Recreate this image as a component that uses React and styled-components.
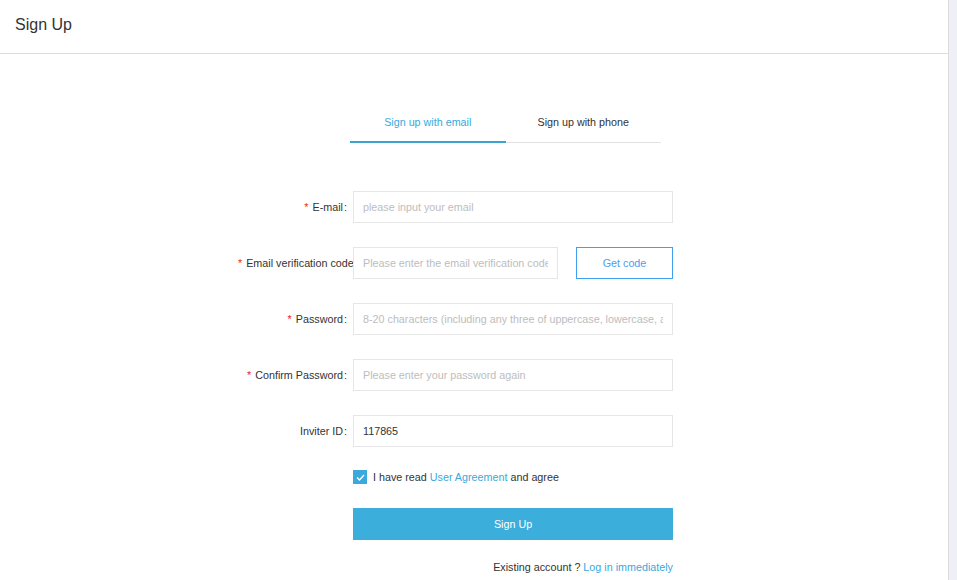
import React from "react";
import styled, { createGlobalStyle } from "styled-components";

const SMALL = "10.75px";

const Global = createGlobalStyle`
  html, body { margin: 0; padding: 0; background: #fff; }
  body { font-family: "Liberation Sans", Arial, sans-serif; color: #333; }
  * { box-sizing: border-box; }
  input::placeholder { color: #bdbdbd; opacity: 1; }
`;

const Page = styled.div`
  display: flex;
  width: 957px;
  height: 580px;
  overflow: hidden;
`;

const Main = styled.div`
  flex: 1;
  border-right: 1px solid #dcdcdc;
  display: flex;
  flex-direction: column;
`;

const Track = styled.div`
  width: 8px;
  background: #eef0f5;
`;

const Header = styled.header`
  height: 54px;
  padding: 16px 15px 0;
  border-bottom: 1px solid #dcdcdc;
  font-size: 16px;
  color: #333;
`;

const Body = styled.div`
  padding-top: 50px;
`;

const TabBar = styled.div`
  display: flex;
  width: 311px;
  margin-left: 350px;
  border-bottom: 1px solid #e2e2e2;
`;

const Tab = styled.div`
  flex: 1;
  text-align: center;
  font-size: ${SMALL};
  line-height: 13px;
  padding: 12px 0;
  margin-bottom: -1px;
  border-bottom: 2px solid ${(p) => (p.$active ? "#3aa3d2" : "transparent")};
  color: ${(p) => (p.$active ? "#39a9dc" : "#333")};
  cursor: pointer;
`;

const Form = styled.form`
  margin: 48px 0 0 238px;
`;

const Row = styled.div`
  display: flex;
  align-items: center;
  margin-bottom: ${(p) => p.$mb}px;
`;

const Label = styled.label`
  flex: none;
  width: 115px;
  padding-right: 6px;
  text-align: right;
  white-space: nowrap;
  font-size: ${SMALL};
  color: #333;
`;

const Star = styled.span`
  color: #f5222d;
  margin-right: 4px;
`;

const Colon = styled.span`
  margin-left: 1px;
`;

const Control = styled.div`
  flex: none;
  width: 320px;
  display: flex;
  align-items: center;
  justify-content: ${(p) => (p.$end ? "flex-end" : "flex-start")};
  gap: ${(p) => (p.$gap ?? 18)}px;
`;

const Input = styled.input`
  width: ${(p) => p.$w || 320}px;
  height: 32px;
  border: 1px solid #e6e6e6;
  background: #fff;
  padding: 0 9px;
  font-family: inherit;
  font-size: ${SMALL};
  color: #333;
  outline: none;
`;

const CodeButton = styled.button`
  width: 97px;
  height: 32px;
  border: 1px solid #3f9ff0;
  background: #fff;
  color: #4a9ef0;
  font-family: inherit;
  font-size: ${SMALL};
  padding: 0;
  cursor: pointer;
`;

const Check = styled.span`
  width: 14px;
  height: 14px;
  background: #3ba9da;
  display: inline-flex;
  align-items: center;
  justify-content: center;
  flex: none;
`;

const AgreeText = styled.span`
  font-size: ${SMALL};
  line-height: 14px;
  color: #333;
`;

const Link = styled.a`
  color: #39a9dc;
  text-decoration: none;
  cursor: pointer;
`;

const Submit = styled.button`
  width: 320px;
  height: 32px;
  border: none;
  background: #3caedb;
  color: #fff;
  font-family: inherit;
  font-size: ${SMALL};
  padding: 0;
  cursor: pointer;
`;

const Foot = styled.span`
  font-size: ${SMALL};
  line-height: 14px;
  color: #333;
`;

const Field = ({ label, required, children, mb = 24 }) => (
  <Row $mb={mb}>
    <Label>
      {required && <Star>*</Star>}
      {label}
      <Colon>:</Colon>
    </Label>
    <Control>{children}</Control>
  </Row>
);

export default function App() {
  return (
    <>
      <Global />
      <Page>
        <Main>
          <Header>Sign Up</Header>
          <Body>
            <TabBar>
              <Tab $active>Sign up with email</Tab>
              <Tab>Sign up with phone</Tab>
            </TabBar>
            <Form onSubmit={(e) => e.preventDefault()}>
              <Field label="E-mail" required>
                <Input placeholder="please input your email" />
              </Field>
              <Field label="Email verification code" required>
                <Input $w={205} placeholder="Please enter the email verification code" />
                <CodeButton type="button">Get code</CodeButton>
              </Field>
              <Field label="Password" required>
                <Input
                  type="password"
                  placeholder="8-20 characters (including any three of uppercase, lowercase, and numbers)"
                />
              </Field>
              <Field label="Confirm Password" required>
                <Input type="password" placeholder="Please enter your password again" />
              </Field>
              <Field label="Inviter ID" mb={23}>
                <Input defaultValue="117865" />
              </Field>
              <Row $mb={24}>
                <Label as="span" />
                <Control $gap={6}>
                  <Check>
                    <svg width="9" height="7" viewBox="0 0 9 7">
                      <path d="M1 3.5 L3.5 6 L8 1" fill="none" stroke="#fff" strokeWidth="1.3" />
                    </svg>
                  </Check>
                  <AgreeText>
                    I have read <Link>User Agreement</Link> and agree
                  </AgreeText>
                </Control>
              </Row>
              <Row $mb={20}>
                <Label as="span" />
                <Control>
                  <Submit type="submit">Sign Up</Submit>
                </Control>
              </Row>
              <Row $mb={0}>
                <Label as="span" />
                <Control $end>
                  <Foot>
                    Existing account ? <Link>Log in immediately</Link>
                  </Foot>
                </Control>
              </Row>
            </Form>
          </Body>
        </Main>
        <Track />
      </Page>
    </>
  );
}
